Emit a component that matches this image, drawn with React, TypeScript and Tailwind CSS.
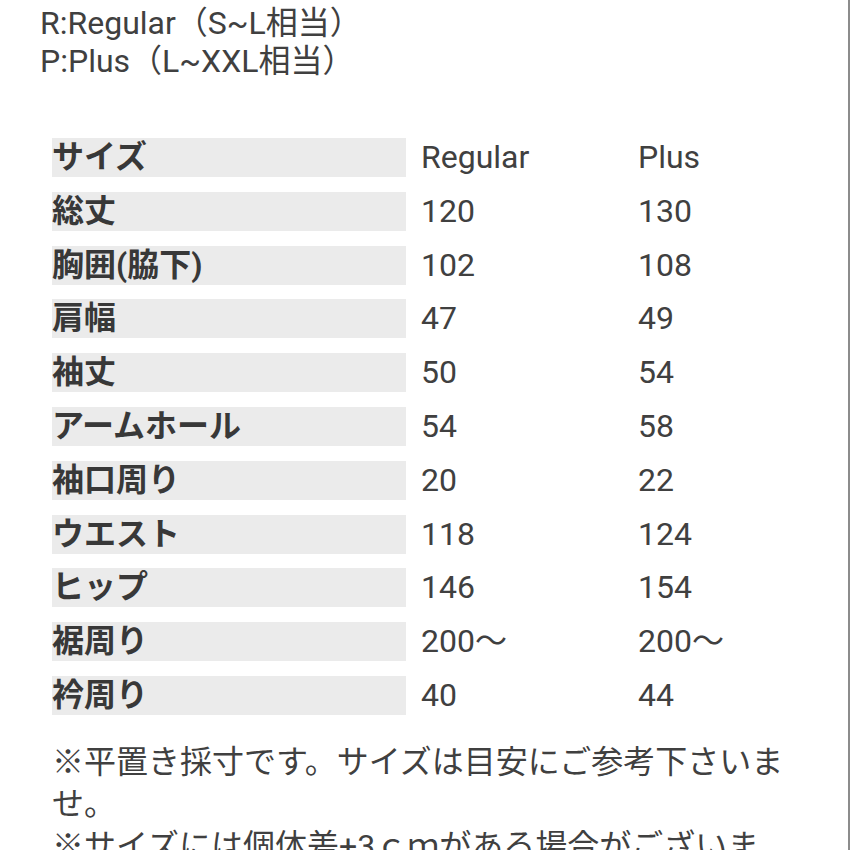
import React from "react";

const rows: [string, string, string][] = [
  ["サイズ", "Regular", "Plus"],
  ["総丈", "120", "130"],
  ["胸囲(脇下)", "102", "108"],
  ["肩幅", "47", "49"],
  ["袖丈", "50", "54"],
  ["アームホール", "54", "58"],
  ["袖口周り", "20", "22"],
  ["ウエスト", "118", "124"],
  ["ヒップ", "146", "154"],
  ["裾周り", "200〜", "200〜"],
  ["衿周り", "40", "44"],
];

export default function App() {
  return (
    <div
      className="w-[850px] h-[850px] overflow-hidden bg-white border-r-2 border-[#8c8c8c] text-[#404040]"
      style={{ fontFamily: 'Roboto, "Noto Sans CJK JP", sans-serif' }}
    >
      <div className="pl-[40px] pt-[4px] text-[32px] leading-[38px]">
        <div>R:Regular（S~L相当）</div>
        <div>P:Plus（L~XXL相当）</div>
      </div>
      <div className="ml-[52px] mt-[58px] grid grid-cols-[354px_232px_1fr] gap-y-[14.8px]">
        {rows.map(([label, r, p]) => (
          <React.Fragment key={label}>
            <div className="h-[39px] bg-[#ebebeb] text-[32px] leading-[39px] font-bold text-[#383838] whitespace-nowrap">
              {label}
            </div>
            <div className="h-[39px] pl-[15px] text-[32px] leading-[39px]">{r}</div>
            <div className="h-[39px] text-[32px] leading-[39px]">{p}</div>
          </React.Fragment>
        ))}
      </div>
      <div className="ml-[52px] mt-[26px] w-[755px] text-[32px] leading-[42px]">
        <p>※平置き採寸です。サイズは目安にご参考下さいませ。</p>
        <p>※サイズには個体差+3ｃｍがある場合がございます。</p>
      </div>
    </div>
  );
}
